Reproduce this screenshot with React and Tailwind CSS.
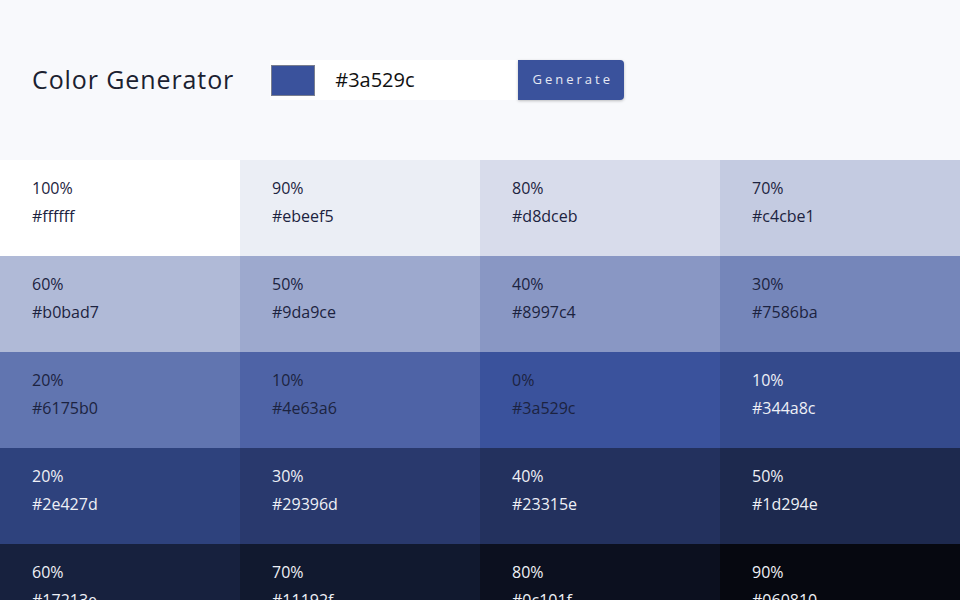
import { useState } from 'react';

const cells = [
  ['100%', '#ffffff', 'light'],
  ['90%', '#ebeef5', 'light'],
  ['80%', '#d8dceb', 'light'],
  ['70%', '#c4cbe1', 'light'],
  ['60%', '#b0bad7', 'light'],
  ['50%', '#9da9ce', 'light'],
  ['40%', '#8997c4', 'light'],
  ['30%', '#7586ba', 'light'],
  ['20%', '#6175b0', 'light'],
  ['10%', '#4e63a6', 'light'],
  ['0%', '#3a529c', 'light'],
  ['10%', '#344a8c', 'dark'],
  ['20%', '#2e427d', 'dark'],
  ['30%', '#29396d', 'dark'],
  ['40%', '#23315e', 'dark'],
  ['50%', '#1d294e', 'dark'],
  ['60%', '#17213e', 'dark'],
  ['70%', '#11192f', 'dark'],
  ['80%', '#0c101f', 'dark'],
  ['90%', '#060810', 'dark'],
];

export default function App() {
  const [value, setValue] = useState('#3a529c');

  return (
    <div className="min-h-dvh bg-[#f8f9fc] font-['Open_Sans',sans-serif]">
      <header className="flex h-[160px] items-center pl-8">
        <h1 className="text-[25px] tracking-[0.9px] text-[#1b2130]">Color Generator</h1>
        <form className="ml-[36px] flex items-center" onSubmit={(e) => e.preventDefault()}>
          <div className="flex h-10 w-[248px] items-center bg-white">
            <span className="ml-px h-[31px] w-[44px] border border-[#7a7f8f] bg-[#3a529c]" />
            <input
              className="ml-5 w-[170px] bg-transparent text-[20px] text-[#111] outline-none"
              value={value}
              onChange={(e) => setValue(e.target.value)}
            />
          </div>
          <button
            type="submit"
            className="h-10 w-[106px] rounded-r bg-[#3a529c] pl-[3px] text-[13px] tracking-[3px] text-[#e6e9f3] shadow-[0_1px_3px_rgba(0,0,0,0.25)]"
          >
            Generate
          </button>
        </form>
      </header>
      <div className="grid grid-cols-4">
        {cells.map(([pct, hex, tone], i) => (
          <div
            key={i}
            className={
              'h-24 pl-8 pt-[14px] text-[16px] leading-[28px] ' +
              (tone === 'light' ? 'text-[#1c2340]' : 'text-[#eef0f6]')
            }
            style={{ backgroundColor: hex }}
          >
            <p>{pct}</p>
            <p>{hex}</p>
          </div>
        ))}
      </div>
    </div>
  );
}
